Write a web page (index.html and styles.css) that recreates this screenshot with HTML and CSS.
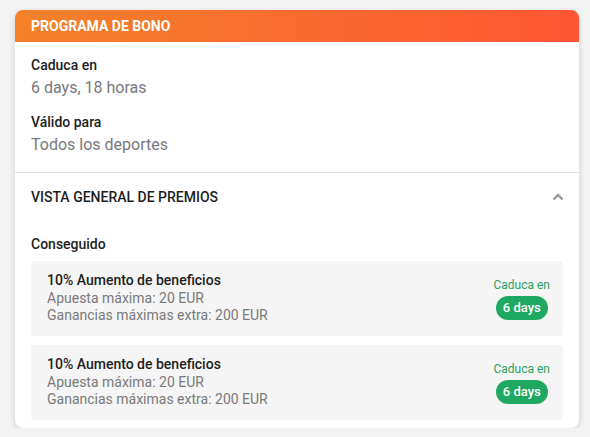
FILE: index.html
```html
<!DOCTYPE html>
<html lang="es">
<head>
  <meta charset="UTF-8" />
  <meta name="viewport" content="width=device-width, initial-scale=1.0" />
  <title>Programa de bono</title>
  <link rel="stylesheet" href="styles.css">
</head>
<body>
  <div class="card">
    <header class="card-head">PROGRAMA DE BONO</header>
    <section class="info">
      <div class="label">Caduca en</div>
      <div class="value">6 days, 18 horas</div>
      <div class="label">Válido para</div>
      <div class="value">Todos los deportes</div>
    </section>
    <section class="rewards">
      <div class="rewards-head">
        <span>VISTA GENERAL DE PREMIOS</span>
        <svg class="chevron" width="12" height="8" viewBox="0 0 12 8">
          <path d="M1.5 6.5 L6 2 L10.5 6.5" fill="none" stroke="#9a9a9a" stroke-width="2.4"/>
        </svg>
      </div>
      <div class="group-title">Conseguido</div>
      <div class="reward">
        <div class="reward-text">
          <div class="reward-title">10% Aumento de beneficios</div>
          <div class="reward-line">Apuesta máxima: 20 EUR</div>
          <div class="reward-line">Ganancias máximas extra: 200 EUR</div>
        </div>
        <div class="expiry">
          <span class="expiry-label">Caduca en</span>
          <span class="pill">6 days</span>
        </div>
      </div>
      <div class="reward">
        <div class="reward-text">
          <div class="reward-title">10% Aumento de beneficios</div>
          <div class="reward-line">Apuesta máxima: 20 EUR</div>
          <div class="reward-line">Ganancias máximas extra: 200 EUR</div>
        </div>
        <div class="expiry">
          <span class="expiry-label">Caduca en</span>
          <span class="pill">6 days</span>
        </div>
      </div>
    </section>
  </div>
</body>
</html>
```

FILE: styles.css
```css
* {
  margin: 0;
  padding: 0;
  box-sizing: border-box;
}
body {
  background: #f3f3f3;
  font-family: Roboto, 'Liberation Sans', sans-serif;
  color: #1e1e1e;
  padding: 10px 11px 0 15px;
}
.card {
  width: 564px;
  background: #fff;
  border-radius: 8px;
  overflow: hidden;
  box-shadow: 0 2px 6px rgba(0, 0, 0, 0.15);
}
.card-head {
  height: 32px;
  line-height: 32px;
  padding: 0 16px;
  background: linear-gradient(90deg, #f4822a 0%, #f86c2f 50%, #fe5534 100%);
  color: #fff;
  font-size: 14px;
  font-weight: bold;
}
.info {
  padding: 13px 16px 15px;
  border-bottom: 1px solid #e2e2e2;
}
.label {
  font-size: 14px;
  font-weight: 500;
  line-height: 20px;
}
.value {
  font-size: 16px;
  line-height: 24px;
  color: #78787c;
  margin: 1px 0 12px;
}
.value:last-child {
  margin-bottom: 0;
}
.rewards {
  padding: 0 16px 8px;
}
.rewards-head {
  display: flex;
  align-items: center;
  justify-content: space-between;
  height: 48px;
  font-size: 14px;
  font-weight: 500;
}
.chevron {
  margin-right: -1px;
}
.group-title {
  font-size: 14px;
  font-weight: 500;
  line-height: 20px;
  margin: 13px 0 7px;
}
.reward {
  display: flex;
  align-items: center;
  justify-content: space-between;
  height: 75px;
  background: #f5f5f5;
  border-radius: 4px;
  padding: 0 13px 0 16px;
  margin-bottom: 9px;
}
.reward:last-child {
  margin-bottom: 0;
}
.reward-text {
  padding-bottom: 3px;
}
.reward-title {
  font-size: 14px;
  font-weight: 500;
  line-height: 20px;
}
.reward-line {
  font-size: 14px;
  line-height: 17px;
  color: #7a7a7a;
}
.expiry {
  display: flex;
  flex-direction: column;
  align-items: center;
  gap: 3px;
  padding-bottom: 1px;
}
.expiry-label {
  font-size: 12px;
  line-height: 16px;
  color: #2ba160;
}
.pill {
  display: inline-block;
  background: #1fa862;
  color: #fff;
  font-size: 13px;
  font-weight: 500;
  line-height: 24px;
  padding: 0 7px;
  border-radius: 12px;
}
```
